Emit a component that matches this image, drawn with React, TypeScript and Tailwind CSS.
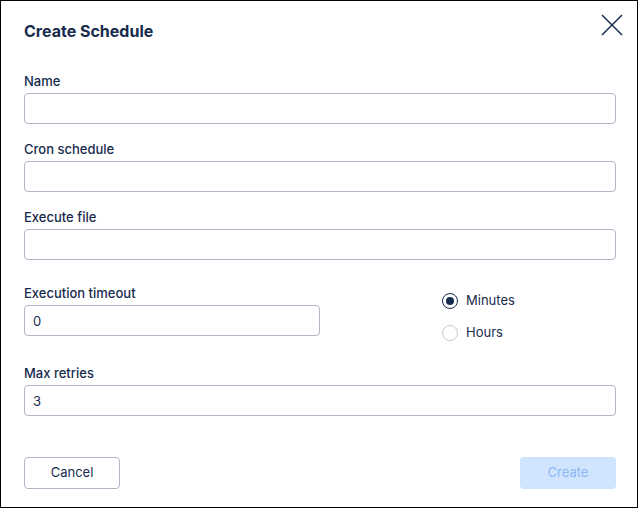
import { useState } from "react";

const navy = "text-[#172b4d]";

function Field({ label, value = "" }: { label: string; value?: string }) {
  return (
    <div className="flex flex-col">
      <label className={`text-[13px] leading-4 font-medium ${navy} mb-[4px]`}>{label}</label>
      <input
        defaultValue={value}
        className={`h-[31px] w-full rounded-[4px] border border-[#b6b3c6] px-2 text-[13px] ${navy} outline-none`}
      />
    </div>
  );
}

function Radio({ label, checked, onClick }: { label: string; checked: boolean; onClick: () => void }) {
  return (
    <button type="button" onClick={onClick} className="flex h-5 items-center gap-2">
      {checked ? (
        <span className="flex h-4 w-4 items-center justify-center rounded-full border-[1.5px] border-[#172b4d]">
          <span className="h-2 w-2 rounded-full bg-[#172b4d]" />
        </span>
      ) : (
        <span className="h-4 w-4 rounded-full border border-[#c9c7d4]" />
      )}
      <span className={`text-[13px] ${navy}`}>{label}</span>
    </button>
  );
}

export default function App() {
  const [unit, setUnit] = useState("minutes");

  return (
    <div
      className="h-[508px] w-[638px] border border-black bg-white pl-[23px] pr-[21px]"
      style={{ fontFamily: "Inter, 'Noto Sans', sans-serif" }}
    >
      <div className="mt-[18px] flex h-6 items-center justify-between">
        <h1 className={`text-[16px] font-bold ${navy}`}>Create Schedule</h1>
        <button type="button" className="-mr-[7px] -mt-[12px]">
          <svg width="22" height="22" viewBox="0 0 22 22" fill="none" stroke="#172b4d" strokeWidth="1.5">
            <path d="M1 1L21 21M21 1L1 21" />
          </svg>
        </button>
      </div>

      <div className="mt-[30px] flex flex-col gap-[17px]">
        <Field label="Name" />
        <Field label="Cron schedule" />
        <Field label="Execute file" />
      </div>

      {/* radio column is a bit taller than the timeout field */}
      <div className="mt-[25px] flex items-start">
        <div className="w-[296px]">
          <Field label="Execution timeout" value="0" />
        </div>
        <div className="ml-[122px] mt-[6px] flex flex-col items-start gap-3">
          <Radio label="Minutes" checked={unit === "minutes"} onClick={() => setUnit("minutes")} />
          <Radio label="Hours" checked={unit === "hours"} onClick={() => setUnit("hours")} />
        </div>
      </div>

      <div className="mt-[22px]">
        <Field label="Max retries" value="3" />
      </div>

      <div className="mt-[41px] flex justify-between">
        <button
          type="button"
          className={`h-8 w-24 rounded-[4px] border border-[#b6b3c6] text-[13px] ${navy}`}
        >
          Cancel
        </button>
        <button
          type="button"
          disabled
          className="h-8 w-24 rounded-[4px] bg-[#d1e4fd] text-[13px] text-[#8cb8f5]"
        >
          Create
        </button>
      </div>
    </div>
  );
}
